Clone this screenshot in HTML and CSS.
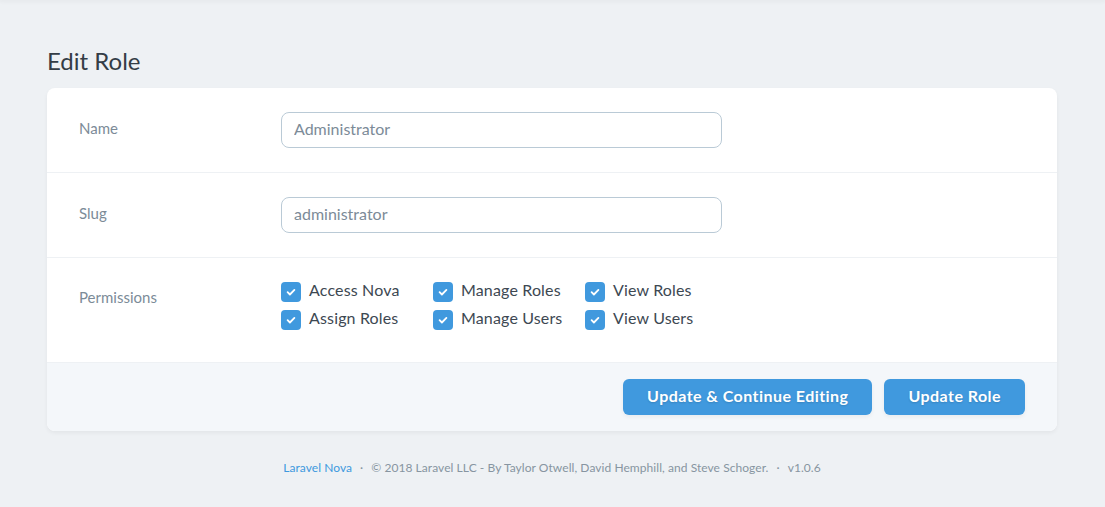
FILE: index.html
```html
<!DOCTYPE html>
<html>
<head>
<meta charset="utf-8">
<link rel="stylesheet" href="styles.css">
</head>
<body>
<div class="topbar"></div>
<main class="content">
  <h1 class="title">Edit Role</h1>
  <form class="card">
    <div class="row">
      <div class="label">Name</div>
      <div class="field"><input class="input" type="text" value="Administrator"></div>
    </div>
    <div class="row">
      <div class="label">Slug</div>
      <div class="field"><input class="input" type="text" value="administrator"></div>
    </div>
    <div class="row row-perms">
      <div class="label">Permissions</div>
      <div class="field">
        <div class="perms">
          <label class="perm"><span class="box"><svg viewBox="0 0 20 20" width="20" height="20"><path d="M6.6 10.2l2.3 2.3 4.5-4.6" fill="none" stroke="#fff" stroke-width="1.8" stroke-linecap="round" stroke-linejoin="round"/></svg></span><span class="perm-text">Access Nova</span></label>
          <label class="perm"><span class="box"><svg viewBox="0 0 20 20" width="20" height="20"><path d="M6.6 10.2l2.3 2.3 4.5-4.6" fill="none" stroke="#fff" stroke-width="1.8" stroke-linecap="round" stroke-linejoin="round"/></svg></span><span class="perm-text">Manage Roles</span></label>
          <label class="perm"><span class="box"><svg viewBox="0 0 20 20" width="20" height="20"><path d="M6.6 10.2l2.3 2.3 4.5-4.6" fill="none" stroke="#fff" stroke-width="1.8" stroke-linecap="round" stroke-linejoin="round"/></svg></span><span class="perm-text">View Roles</span></label>
          <label class="perm"><span class="box"><svg viewBox="0 0 20 20" width="20" height="20"><path d="M6.6 10.2l2.3 2.3 4.5-4.6" fill="none" stroke="#fff" stroke-width="1.8" stroke-linecap="round" stroke-linejoin="round"/></svg></span><span class="perm-text">Assign Roles</span></label>
          <label class="perm"><span class="box"><svg viewBox="0 0 20 20" width="20" height="20"><path d="M6.6 10.2l2.3 2.3 4.5-4.6" fill="none" stroke="#fff" stroke-width="1.8" stroke-linecap="round" stroke-linejoin="round"/></svg></span><span class="perm-text">Manage Users</span></label>
          <label class="perm"><span class="box"><svg viewBox="0 0 20 20" width="20" height="20"><path d="M6.6 10.2l2.3 2.3 4.5-4.6" fill="none" stroke="#fff" stroke-width="1.8" stroke-linecap="round" stroke-linejoin="round"/></svg></span><span class="perm-text">View Users</span></label>
        </div>
      </div>
    </div>
    <div class="actions">
      <button type="button" class="btn">Update &amp; Continue Editing</button>
      <button type="button" class="btn">Update Role</button>
    </div>
  </form>
  <p class="footer"><a class="footer-link">Laravel Nova</a><span class="dot">·</span>© 2018 Laravel LLC - By Taylor Otwell, David Hemphill, and Steve Schoger.<span class="dot">·</span>v1.0.6</p>
</main>
</body>
</html>
```
FILE: styles.css
```css
* { box-sizing: border-box; }
html, body {
  margin: 0;
  padding: 0;
  background: #eef1f4;
  font-family: Lato, "Noto Sans", sans-serif;
  color: #3d4852;
}
.topbar {
  height: 0;
  box-shadow: 0 0 4px 1px rgba(0,0,0,0.08);
}
.content {
  padding: 46px 48px 0 47px;
}
.title {
  margin: 0 0 13px 0;
  font-size: 24px;
  line-height: 29px;
  font-weight: 400;
  color: #343d46;
}
.card {
  width: 1010px;
  background: #fff;
  border-radius: 8px;
  box-shadow: 0 2px 4px rgba(0,0,0,0.05);
  overflow: hidden;
}
.row {
  display: flex;
  border-bottom: 1px solid #eef1f4;
}
.label {
  width: 202px;
  padding: 31px 32px 0 32px;
  font-size: 15px;
  line-height: 18px;
  color: #7c8b98;
}
.row-perms .label { padding-top: 30px; }
.field {
  width: 505px;
  padding: 24px 32px;
}
.row-perms .field {
  padding: 24px 32px 32px;
}
.input {
  display: block;
  width: 100%;
  height: 36px;
  border: 1px solid #bacad6;
  border-radius: 8px;
  padding: 0 12px 3px;
  font-family: inherit;
  font-size: 16px;
  color: #7c8b98;
  background: #fff;
  outline: none;
}
.perms {
  display: grid;
  grid-template-columns: repeat(3, 152px);
  row-gap: 8px;
}
.perm {
  display: flex;
  align-items: center;
  height: 20px;
  font-size: 16px;
  color: #3d4852;
  white-space: nowrap;
  letter-spacing: 0.15px;
}
.perm-text {
  padding-bottom: 5px;
}
.box {
  width: 20px;
  height: 20px;
  border-radius: 4px;
  background: #4099de;
  margin-right: 8px;
  flex: none;
  display: flex;
}
.actions {
  display: flex;
  justify-content: flex-end;
  gap: 12px;
  padding: 16px 32px 16px;
  background: #f4f7fa;
}
.btn {
  height: 36px;
  padding: 0 24px 4px;
  border: 0;
  border-radius: 6px;
  background: #4099de;
  color: #fff;
  font-family: inherit;
  font-weight: 700;
  font-size: 16px;
  letter-spacing: 0.45px;
  text-shadow: 0 1px 2px rgba(0,0,0,0.15);
  box-shadow: 0 2px 4px rgba(0,0,0,0.05);
}
.footer {
  margin: 29px 0 0 0;
  text-align: center;
  font-size: 12px;
  line-height: 16px;
  letter-spacing: 0.06px;
  color: #8795a1;
}
.footer-link { color: #4099de; }
.dot { margin: 0 8px; }
```
